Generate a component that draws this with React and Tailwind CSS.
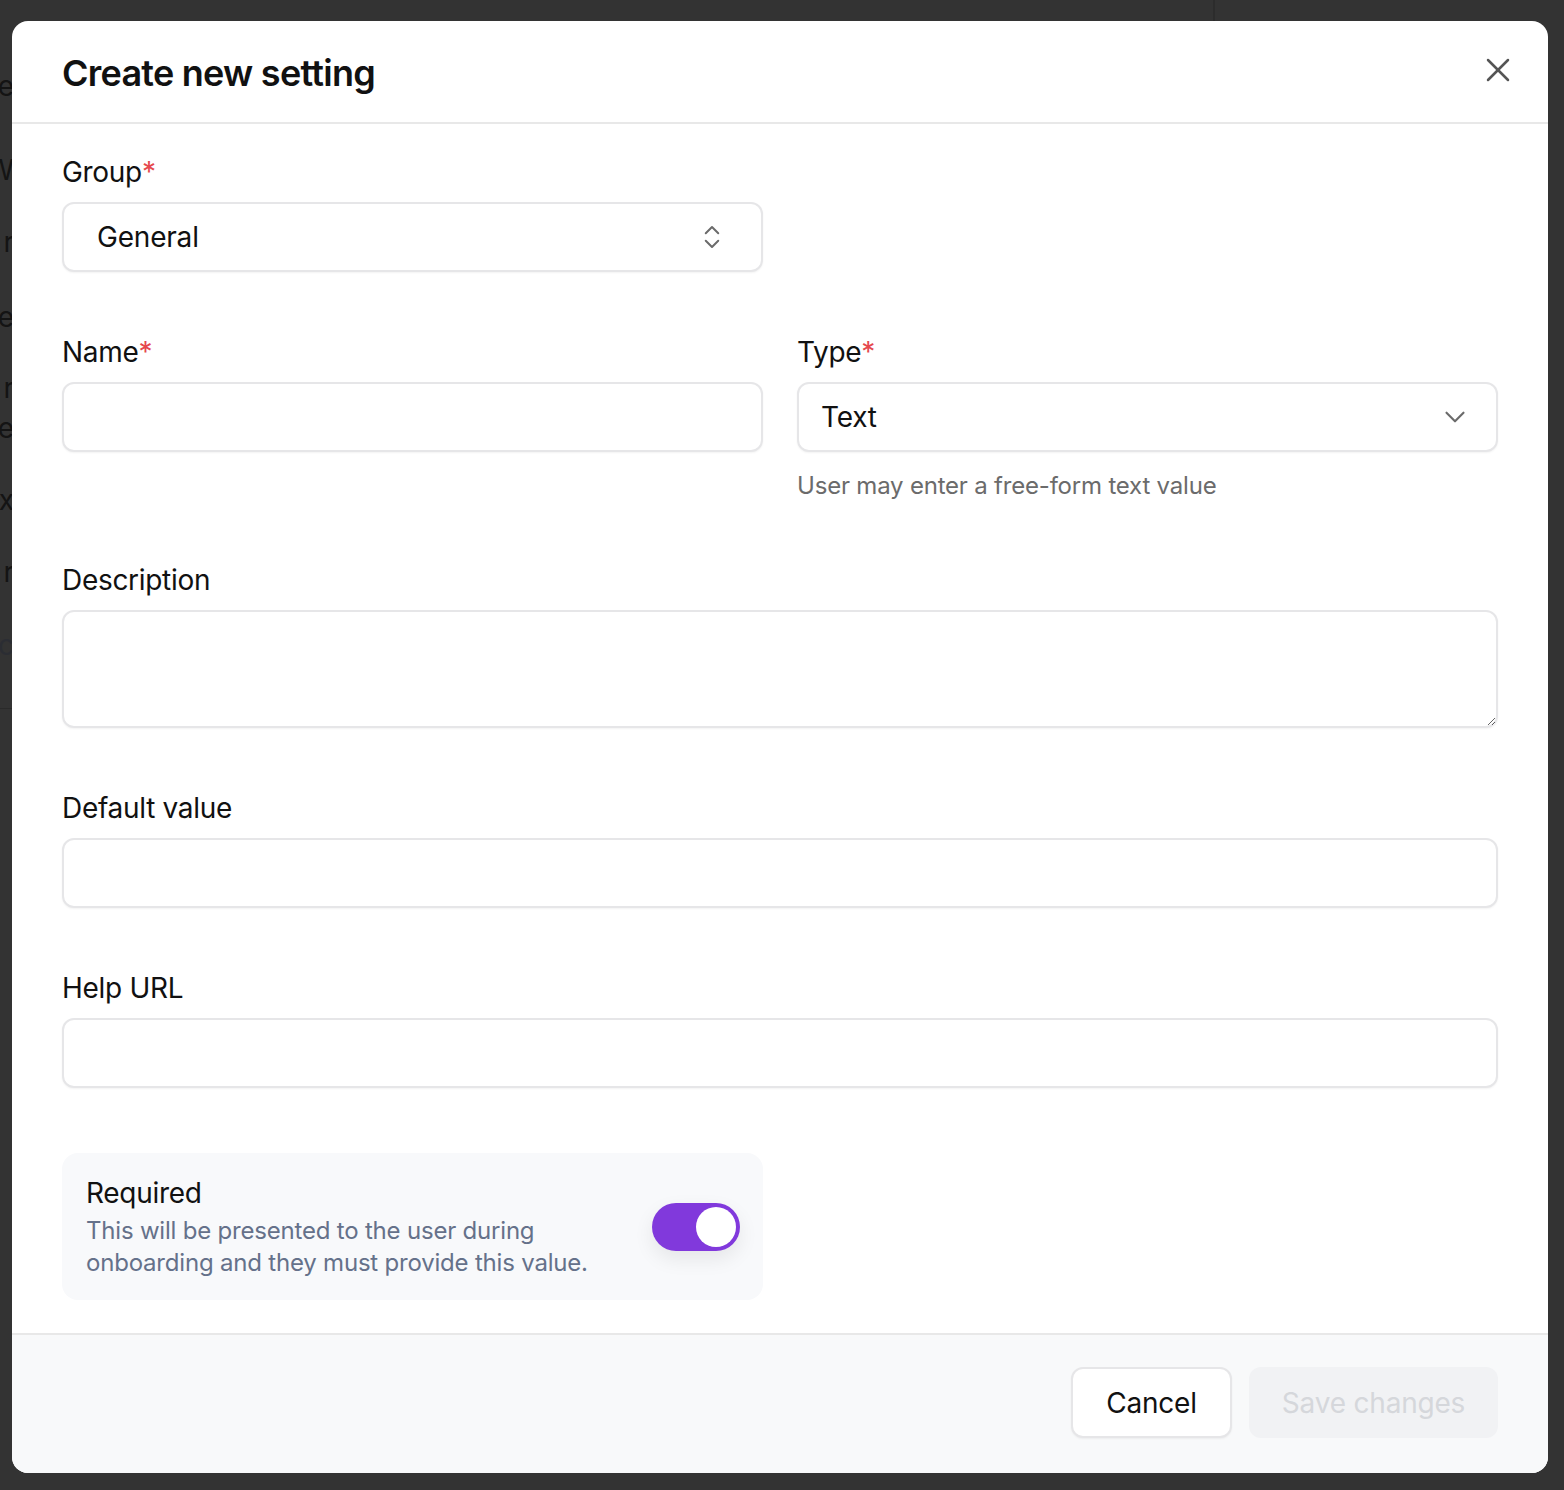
import React from "react";
import { ChevronsUpDown, ChevronDown, X } from "lucide-react";

const font = { fontFamily: "Inter, 'Noto Sans', sans-serif" };

function Label({ children, required }) {
  return (
    <div className="text-[28px] leading-[36px] text-[#111] tracking-[-0.3px] mb-[12px]">
      {children}
      {required && <span className="text-[#e5484d]">*</span>}
    </div>
  );
}

const inputCls =
  "block w-full h-[70px] rounded-[12px] border-2 border-[#e6e6e8] bg-white px-[32px] text-[28px] text-[#111] shadow-[0_1px_2px_rgba(0,0,0,0.05)] outline-none";

export default function App() {
  const bgLines = [
    { top: 68, t: "ne" },
    { top: 152, t: "W" },
    { top: 224, t: "r" },
    { top: 299, t: "e" },
    { top: 370, t: "r" },
    { top: 410, t: "e" },
    { top: 482, t: "x" },
    { top: 554, t: "r" },
    { top: 627, t: "c", dim: true },
  ];
  return (
    <div className="relative w-full h-[1490px] bg-[#333333] overflow-hidden" style={font}>
      {/* underlying page glimpses */}
      <div className="absolute left-[1213px] top-0 w-[2px] h-[21px] bg-[#2c2c2c]" />
      <div className="absolute left-0 top-[708px] w-[12px] h-[1px] bg-[#2a2a2a]" />
      {bgLines.map((l, i) => (
        <div
          key={i}
          className={`absolute left-[-188px] w-[202px] text-right text-[28px] leading-[36px] ${l.dim ? "text-[#2b2d33]" : "text-[#141414]"}`}
          style={{ top: l.top }}
        >
          {l.t}
        </div>
      ))}

      <div className="relative pt-[21px] pl-[12px]">
        <div className="w-[1536px] h-[1452px] bg-white rounded-[16px] overflow-hidden flex flex-col">
          {/* header */}
          <div className="h-[103px] shrink-0 border-b-2 border-[#e8e8e8] flex items-center justify-between pl-[50px] pr-[30px]">
            <h1 className="text-[36px] font-semibold text-[#111] tracking-[-0.75px] leading-[44px] mt-[3px]">
              Create new setting
            </h1>
            <button className="text-[#555] -mt-[3px]">
              <X size={40} strokeWidth={1.5} />
            </button>
          </div>

          {/* body */}
          <div className="flex-1 px-[50px] pt-[30px]">
            <div className="grid grid-cols-2 gap-x-[34px]">
              <div>
                <Label required>Group</Label>
                <div className={inputCls + " flex items-center justify-between !pl-[33px] !pr-[34px]"}>
                  <span className="tracking-[-0.2px]">General</span>
                  <ChevronsUpDown size={30} strokeWidth={1.6} className="text-[#6b6b6b]" />
                </div>
              </div>
              <div />
            </div>

            <div className="grid grid-cols-2 gap-x-[34px] mt-[62px]">
              <div>
                <Label required>Name</Label>
                <input className={inputCls} />
              </div>
              <div>
                <Label required>Type</Label>
                <div className={inputCls + " flex items-center justify-between !pl-[22px] !pr-[24px]"}>
                  <span className="tracking-[-0.2px]">Text</span>
                  <ChevronDown size={34} strokeWidth={1.5} className="text-[#6b6b6b]" />
                </div>
                <div className="mt-[18px] text-[24px] leading-[32px] text-[#6b6b6b] tracking-[-0.2px]">
                  User may enter a free-form text value
                </div>
              </div>
            </div>

            <div className="mt-[60px]">
              <Label>Description</Label>
              <textarea className="block w-full h-[118px] rounded-[12px] border-2 border-[#e6e6e8] bg-white px-[32px] py-[16px] text-[28px] shadow-[0_1px_2px_rgba(0,0,0,0.05)] outline-none" />
            </div>

            <div className="mt-[62px]">
              <Label>Default value</Label>
              <input className={inputCls} />
            </div>

            <div className="mt-[62px]">
              <Label>Help URL</Label>
              <input className={inputCls} />
            </div>

            <div className="mt-[65px] w-[701px] h-[147px] rounded-[16px] bg-[#f8f9fb] pl-[24px] pr-[23px] flex items-center justify-between">
              <div>
                <div className="text-[28px] leading-[36px] text-[#111] tracking-[-0.3px]">Required</div>
                <div className="text-[24px] leading-[32px] text-[#65718a] tracking-[-0.2px] mt-[4px]">
                  This will be presented to the user during
                  <br />
                  onboarding and they must provide this value.
                </div>
              </div>
              <div className="w-[88px] h-[48px] rounded-full bg-[#8139dc] p-[4px] flex justify-end shadow-[0_8px_20px_rgba(0,0,0,0.08)] mt-[1px]">
                <div className="w-[40px] h-[40px] rounded-full bg-white" />
              </div>
            </div>
          </div>

          {/* footer */}
          <div className="h-[140px] shrink-0 border-t-2 border-[#e8e8e8] bg-[#f8f9fa] flex items-center justify-end gap-[17px] px-[50px]">
            <button className="w-[161px] h-[71px] rounded-[12px] border-2 border-[#e6e6e8] bg-white text-[28px] text-[#111] tracking-[-0.2px] shadow-[0_1px_2px_rgba(0,0,0,0.05)] -mt-[3px]">
              Cancel
            </button>
            <button className="w-[249px] h-[71px] rounded-[12px] bg-[#f1f2f4] text-[28px] text-[#d5d7db] tracking-[-0.2px] -mt-[3px]">
              Save changes
            </button>
          </div>
        </div>
      </div>
    </div>
  );
}
